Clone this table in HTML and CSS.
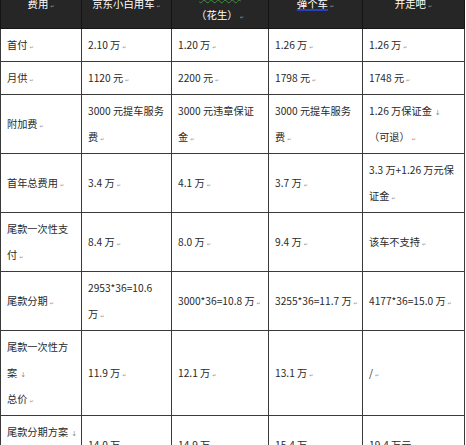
FILE: index.html
```html
<!DOCTYPE html>
<html lang="zh-CN">
<head>
<meta charset="utf-8">
<title>费用对比</title>
<link rel="stylesheet" href="styles.css">
</head>
<body>
<div class="sheet">
  <table class="grid">
    <colgroup>
      <col class="c1"><col class="c2"><col class="c3"><col class="c4"><col class="c5">
    </colgroup>
    <thead>
      <tr>
        <th>费用<span class="pm">↵</span></th>
        <th>京东小白用车<span class="pm">↵</span></th>
        <th><span class="spell">花生好车</span><br>（花生）<span class="pm">↵</span></th>
        <th><span class="link">弹个车</span><span class="pm">↵</span></th>
        <th>开走吧<span class="pm">↵</span></th>
      </tr>
    </thead>
    <tbody>
      <tr>
        <td>首付<span class="pm">↵</span></td>
        <td>2.10 万<span class="pm">↵</span></td>
        <td>1.20 万<span class="pm">↵</span></td>
        <td>1.26 万<span class="pm">↵</span></td>
        <td>1.26 万<span class="pm">↵</span></td>
      </tr>
      <tr>
        <td>月供<span class="pm">↵</span></td>
        <td>1120 元<span class="pm">↵</span></td>
        <td>2200 元<span class="pm">↵</span></td>
        <td>1798 元<span class="pm">↵</span></td>
        <td>1748 元<span class="pm">↵</span></td>
      </tr>
      <tr>
        <td>附加费<span class="pm">↵</span></td>
        <td>3000 元提车服务<br>费<span class="pm">↵</span></td>
        <td>3000 元违章保证<br>金<span class="pm">↵</span></td>
        <td>3000 元提车服务<br>费<span class="pm">↵</span></td>
        <td>1.26 万保证金<span class="lb">↓</span><br>（可退）<span class="pm">↵</span></td>
      </tr>
      <tr>
        <td>首年总费用<span class="pm">↵</span></td>
        <td>3.4 万<span class="pm">↵</span></td>
        <td>4.1 万<span class="pm">↵</span></td>
        <td>3.7 万<span class="pm">↵</span></td>
        <td>3.3 万+1.26 万元保<br>证金<span class="pm">↵</span></td>
      </tr>
      <tr>
        <td>尾款一次性支<br>付<span class="pm">↵</span></td>
        <td>8.4 万<span class="pm">↵</span></td>
        <td>8.0 万<span class="pm">↵</span></td>
        <td>9.4 万<span class="pm">↵</span></td>
        <td>该车不支持<span class="pm">↵</span></td>
      </tr>
      <tr>
        <td>尾款分期<span class="pm">↵</span></td>
        <td>2953*36=10.6<br>万<span class="pm">↵</span></td>
        <td>3000*36=10.8 万<span class="pm">↵</span></td>
        <td>3255*36=11.7 万<span class="pm">↵</span></td>
        <td>4177*36=15.0 万<span class="pm">↵</span></td>
      </tr>
      <tr>
        <td>尾款一次性方<br>案<span class="lb">↓</span><br>总价<span class="pm">↵</span></td>
        <td>11.9 万<span class="pm">↵</span></td>
        <td>12.1 万<span class="pm">↵</span></td>
        <td>13.1 万<span class="pm">↵</span></td>
        <td>/<span class="pm">↵</span></td>
      </tr>
      <tr>
        <td>尾款分期方案<span class="lb">↓</span><br>总价<span class="pm">↵</span></td>
        <td>14.0 万<span class="pm">↵</span></td>
        <td>14.9 万<span class="pm">↵</span></td>
        <td>15.4 万<span class="pm">↵</span></td>
        <td>19.4 万元<span class="pm">↵</span></td>
      </tr>
    </tbody>
  </table>
</div>
</body>
</html>
```
FILE: styles.css
```css
html, body {
  margin: 0;
  padding: 0;
  background: #ffffff;
}

.sheet {
  width: 466px;
  height: 445px;
  overflow: hidden;
  background: #ffffff;
}

.grid {
  border-collapse: collapse;
  table-layout: fixed;
  width: 465px;
  margin-top: -21px;
  font-family: "Noto Sans CJK SC", "Noto Sans", sans-serif;
  font-size: 10.2px;
  color: #2a2a2a;
}

.c1 { width: 81px; }
.c2 { width: 90px; }
.c3 { width: 97px; }
.c4 { width: 94px; }
.c5 { width: 102px; }

.grid th {
  background: #262626;
  color: #ffffff;
  font-weight: normal;
  font-size: 10.4px;
  line-height: 22px;
  padding: 2px 4px;
  border: 1px solid #141414;
  text-align: center;
  vertical-align: middle;
  white-space: nowrap;
}

.grid td {
  border: 1px solid #3a3a3a;
  padding: 3px 4px 3px 6px;
  line-height: 26px;
  text-align: left;
  vertical-align: middle;
  white-space: nowrap;
}

.pm {
  font-family: "DejaVu Sans", sans-serif;
  font-size: 5px;
  line-height: 0;
  color: #9a9a9a;
  margin-left: 2px;
}

.lb {
  font-family: "DejaVu Sans", sans-serif;
  font-size: 7px;
  line-height: 0;
  color: #8a8a8a;
  margin-left: 3px;
}

.grid th .pm {
  color: #8c8c8c;
}

.spell {
  text-decoration: underline wavy #3f8f3f;
  text-decoration-thickness: 1px;
  text-underline-offset: 2px;
}

.link {
  text-decoration: underline;
  text-decoration-color: #2b3fb8;
  text-decoration-thickness: 2px;
  text-underline-offset: 1px;
}
```
